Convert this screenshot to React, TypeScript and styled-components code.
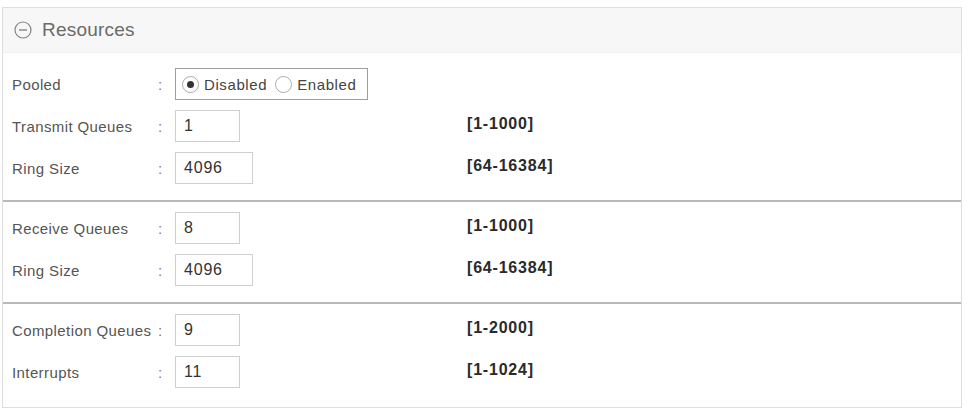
import * as React from 'react'
import styled, { createGlobalStyle } from 'styled-components'

interface FieldRow {
  label: string,
  value: string,
  range: string,
  wide?: boolean,
}

interface InputProps {
  wide?: boolean,
}

interface SectionProps {
  first?: boolean,
  last?: boolean,
}

const GlobalStyle = createGlobalStyle`
  body {
    margin: 0;
    background: #ffffff;
    font-family: "Liberation Sans", Arial, sans-serif;
  }
  #root {
    padding: 7px 6px 0 2px;
  }
`

const Panel = styled.div`
  width: 958px;
  border: 1px solid #dedede;
  background: #ffffff;
`

const Header = styled.div`
  height: 44px;
  display: flex;
  align-items: center;
  gap: 10px;
  padding-left: 11px;
  background: #f7f7f7;
  border-bottom: 1px solid #f0f0f0;
  color: #6a6a6a;
  font-size: 19px;
  letter-spacing: 0.2px;
`

const Section = styled.div<SectionProps>`
  padding: ${props => props.first ? '10px' : '5px'} 0 ${props => props.last ? '14px' : '11px'};
  border-bottom: ${props => props.last ? 'none' : '2px solid #b9b9b9'};
`

const Row = styled.div`
  height: 42px;
  display: grid;
  grid-template-columns: 146px 17px 292px auto;
  align-items: center;
  padding-left: 9px;
`

const Label = styled.div`
  font-size: 15px;
  letter-spacing: 0.4px;
  color: #555555;
`

const Colon = styled.div`
  font-size: 15px;
  color: #777777;
`

const Input = styled.div`
  box-sizing: border-box;
  width: ${(props: InputProps) => props.wide ? '78px' : '65px'};
  height: 32px;
  display: flex;
  align-items: center;
  padding-left: 8px;
  border: 1px solid #cfcfcf;
  font-size: 16px;
  letter-spacing: 0.8px;
  color: #333333;
`

const Range = styled.div`
  font-size: 16px;
  font-weight: bold;
  letter-spacing: 0.8px;
  color: #2a2a2a;
  margin-top: -4px;
`

const RadioGroup = styled.div`
  box-sizing: border-box;
  width: 193px;
  height: 32px;
  display: flex;
  align-items: center;
  gap: 8px;
  padding-left: 6px;
  border: 1px solid #9e9e9e;
  font-size: 15px;
  letter-spacing: 0.6px;
  color: #444444;
`

const RadioOption = styled.span`
  display: flex;
  align-items: center;
  gap: 5px;
`

const RadioDot = styled.span<{ checked?: boolean }>`
  box-sizing: border-box;
  width: 17px;
  height: 17px;
  border-radius: 50%;
  border: 1px solid #ababab;
  display: flex;
  align-items: center;
  justify-content: center;
  &::after {
    content: '';
    width: 7px;
    height: 7px;
    border-radius: 50%;
    background: ${props => props.checked ? '#333333' : 'transparent'};
  }
`

const sections: FieldRow[][] = [
  [
    { label: 'Transmit Queues', value: '1', range: '[1-1000]' },
    { label: 'Ring Size', value: '4096', range: '[64-16384]', wide: true },
  ],
  [
    { label: 'Receive Queues', value: '8', range: '[1-1000]' },
    { label: 'Ring Size', value: '4096', range: '[64-16384]', wide: true },
  ],
  [
    { label: 'Completion Queues', value: '9', range: '[1-2000]' },
    { label: 'Interrupts', value: '11', range: '[1-1024]' },
  ],
]

const CollapseIcon = () => (
  <svg width="18" height="18" viewBox="0 0 18 18">
    <circle cx="9" cy="9" r="8" fill="none" stroke="#858585" strokeWidth="1.2" />
    <line x1="5" y1="9" x2="13" y2="9" stroke="#858585" strokeWidth="1.4" />
  </svg>
)

const App = () => (
  <>
    <GlobalStyle />
    <Panel>
      <Header>
        <CollapseIcon />
        Resources
      </Header>
      {sections.map((rows, i) => (
        <Section key={i} first={i === 0} last={i === sections.length - 1}>
          {i === 0 && (
            <Row>
              <Label>Pooled</Label>
              <Colon>:</Colon>
              <RadioGroup>
                <RadioOption><RadioDot checked />Disabled</RadioOption>
                <RadioOption><RadioDot />Enabled</RadioOption>
              </RadioGroup>
            </Row>
          )}
          {rows.map(row => (
            <Row key={row.label + row.range}>
              <Label>{row.label}</Label>
              <Colon>:</Colon>
              <Input wide={row.wide}>{row.value}</Input>
              <Range>{row.range}</Range>
            </Row>
          ))}
        </Section>
      ))}
    </Panel>
  </>
)

export default App
